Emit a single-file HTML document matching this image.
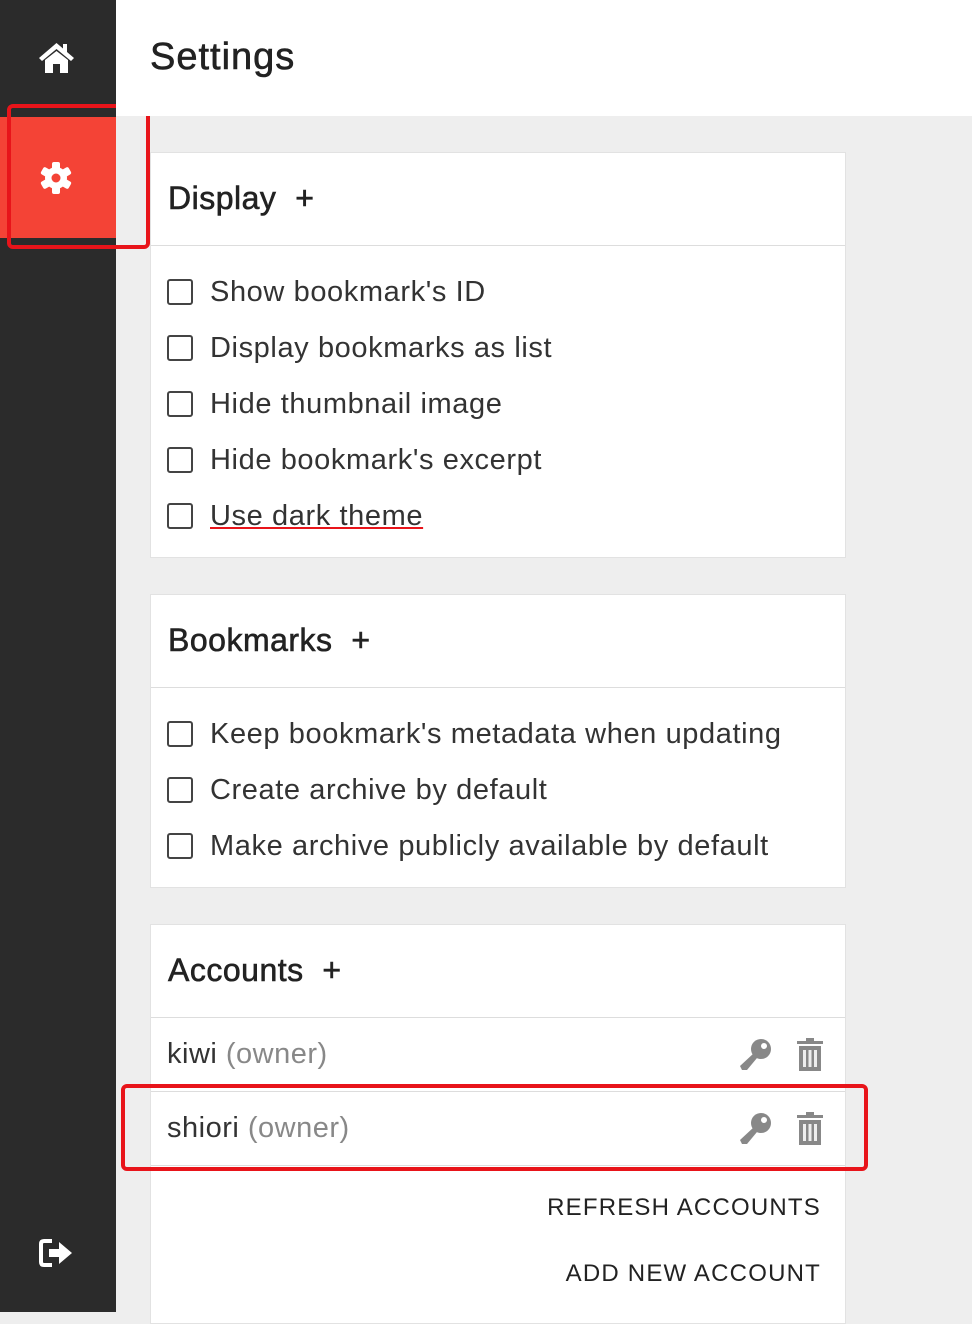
<!DOCTYPE html>
<html><head><meta charset="utf-8"><style>
*{box-sizing:border-box;margin:0;padding:0}
body{width:972px;height:1312px;overflow:hidden;background:#eeeeee;font-family:"Liberation Sans",sans-serif;color:#222;position:relative}
.side{position:absolute;left:0;top:0;width:116px;height:1312px;background:#2b2b2b}
.active{position:absolute;left:0;top:117px;width:116px;height:121px;background:#f44336}
.hl{position:absolute;border:4px solid #e8141a;border-radius:6px}
.head{position:absolute;left:116px;top:0;width:856px;height:116px;background:#fff}
.head h1{position:absolute;left:34px;top:36px;font-size:38px;font-weight:normal;letter-spacing:1px;color:#222;-webkit-text-stroke:0.6px #222}
.card{position:absolute;left:150px;width:696px;background:#fff;border:1px solid #e2e2e2}
.ch{height:93px;border-bottom:1px solid #ddd;font-size:32px;padding:27px 0 0 17px;color:#222;letter-spacing:0.5px;-webkit-text-stroke:0.6px #222}
.row{height:56px;display:flex;align-items:center;padding-left:16px;font-size:29px;color:#333;letter-spacing:0.6px}
.cb{width:26px;height:26px;border:2px solid #444;border-radius:3px;margin-right:17px}
.acc{height:74px;border-bottom:1px solid #ddd;display:flex;align-items:center;padding-left:16px;font-size:29px;color:#333;position:relative;letter-spacing:0.5px}
.acc span{color:#888}
.ic{position:absolute;top:20px}
.btn{text-align:right;padding-right:24px;font-size:24px;letter-spacing:1.2px;color:#222}
</style></head><body>
<div class="side"></div>
<div class="active"></div>
<svg style="position:absolute;left:38px;top:41px" width="37" height="33" viewBox="0 0 37 33"><path d="M18.5 2 L1 17 L4 20 L18.5 8 L33 20 L36 17 L29 11 L29 3 L25 3 L25 7.5Z" fill="#fff"/><path d="M7 19 L18.5 10 L30 19 L30 32 L22 32 L22 23 L15 23 L15 32 L7 32Z" fill="#fff"/></svg>
<svg style="position:absolute;left:39px;top:161px" width="34" height="34" viewBox="-17 -17 34 34"><g fill="#fff"><circle r="11"/><rect x="-4" y="-16" width="8" height="32" rx="2"/><rect x="-4" y="-16" width="8" height="32" rx="2" transform="rotate(60)"/><rect x="-4" y="-16" width="8" height="32" rx="2" transform="rotate(120)"/></g><circle r="4.5" fill="#f44336"/></svg>
<svg style="position:absolute;left:39px;top:1238px" width="36" height="30" viewBox="0 0 36 30"><path d="M13 3 H5 Q2 3 2 6 V24 Q2 27 5 27 H13" stroke="#fff" stroke-width="4" fill="none"/><path d="M10 11 H20 V4 L33 15 L20 26 V19 H10Z" fill="#fff"/></svg>
<div class="hl" style="left:7px;top:104px;width:143px;height:145px"></div>
<div class="head"><h1>Settings</h1></div>
<div class="card" style="top:152px;height:406px">
<div class="ch">Display &nbsp;+</div>
<div style="padding-top:18px">
<div class="row"><div class="cb"></div>Show bookmark's ID</div>
<div class="row"><div class="cb"></div>Display bookmarks as list</div>
<div class="row"><div class="cb"></div>Hide thumbnail image</div>
<div class="row"><div class="cb"></div>Hide bookmark's excerpt</div>
<div class="row"><div class="cb"></div><span style="text-decoration:underline;text-decoration-color:#e8141a">Use dark theme</span></div>
</div></div>
<div class="card" style="top:594px;height:294px">
<div class="ch">Bookmarks &nbsp;+</div>
<div style="padding-top:18px">
<div class="row"><div class="cb"></div>Keep bookmark's metadata when updating</div>
<div class="row"><div class="cb"></div>Create archive by default</div>
<div class="row"><div class="cb"></div>Make archive publicly available by default</div>
</div></div>
<div class="card" style="top:924px;height:400px">
<div class="ch">Accounts &nbsp;+</div>
<div class="acc">kiwi&nbsp;<span>(owner)</span>
<svg class="ic" style="left:586px" width="36" height="34" viewBox="0 0 36 34"><circle cx="24" cy="11" r="10" fill="#888"/><circle cx="27" cy="8" r="3" fill="#fff"/><path d="M17 15 L3 28 L5 32 L10 32 L20 20Z" fill="#888"/></svg>
<svg class="ic" style="left:645px" width="28" height="34" viewBox="0 0 28 34"><rect x="1" y="3" width="26" height="3" fill="#888"/><rect x="10" y="0" width="8" height="3" fill="#888"/><rect x="3" y="8" width="22" height="25" fill="#888"/><rect x="7" y="12" width="3" height="17" fill="#eee"/><rect x="12.5" y="12" width="3" height="17" fill="#eee"/><rect x="18" y="12" width="3" height="17" fill="#eee"/></svg></div>
<div class="acc">shiori&nbsp;<span>(owner)</span>
<svg class="ic" style="left:586px" width="36" height="34" viewBox="0 0 36 34"><circle cx="24" cy="11" r="10" fill="#888"/><circle cx="27" cy="8" r="3" fill="#fff"/><path d="M17 15 L3 28 L5 32 L10 32 L20 20Z" fill="#888"/></svg>
<svg class="ic" style="left:645px" width="28" height="34" viewBox="0 0 28 34"><rect x="1" y="3" width="26" height="3" fill="#888"/><rect x="10" y="0" width="8" height="3" fill="#888"/><rect x="3" y="8" width="22" height="25" fill="#888"/><rect x="7" y="12" width="3" height="17" fill="#eee"/><rect x="12.5" y="12" width="3" height="17" fill="#eee"/><rect x="18" y="12" width="3" height="17" fill="#eee"/></svg></div>
<div class="btn" style="margin-top:28px">REFRESH ACCOUNTS</div>
<div class="btn" style="margin-top:38px">ADD NEW ACCOUNT</div>
</div>
<div class="hl" style="left:121px;top:1084px;width:747px;height:87px"></div>
</body></html>
